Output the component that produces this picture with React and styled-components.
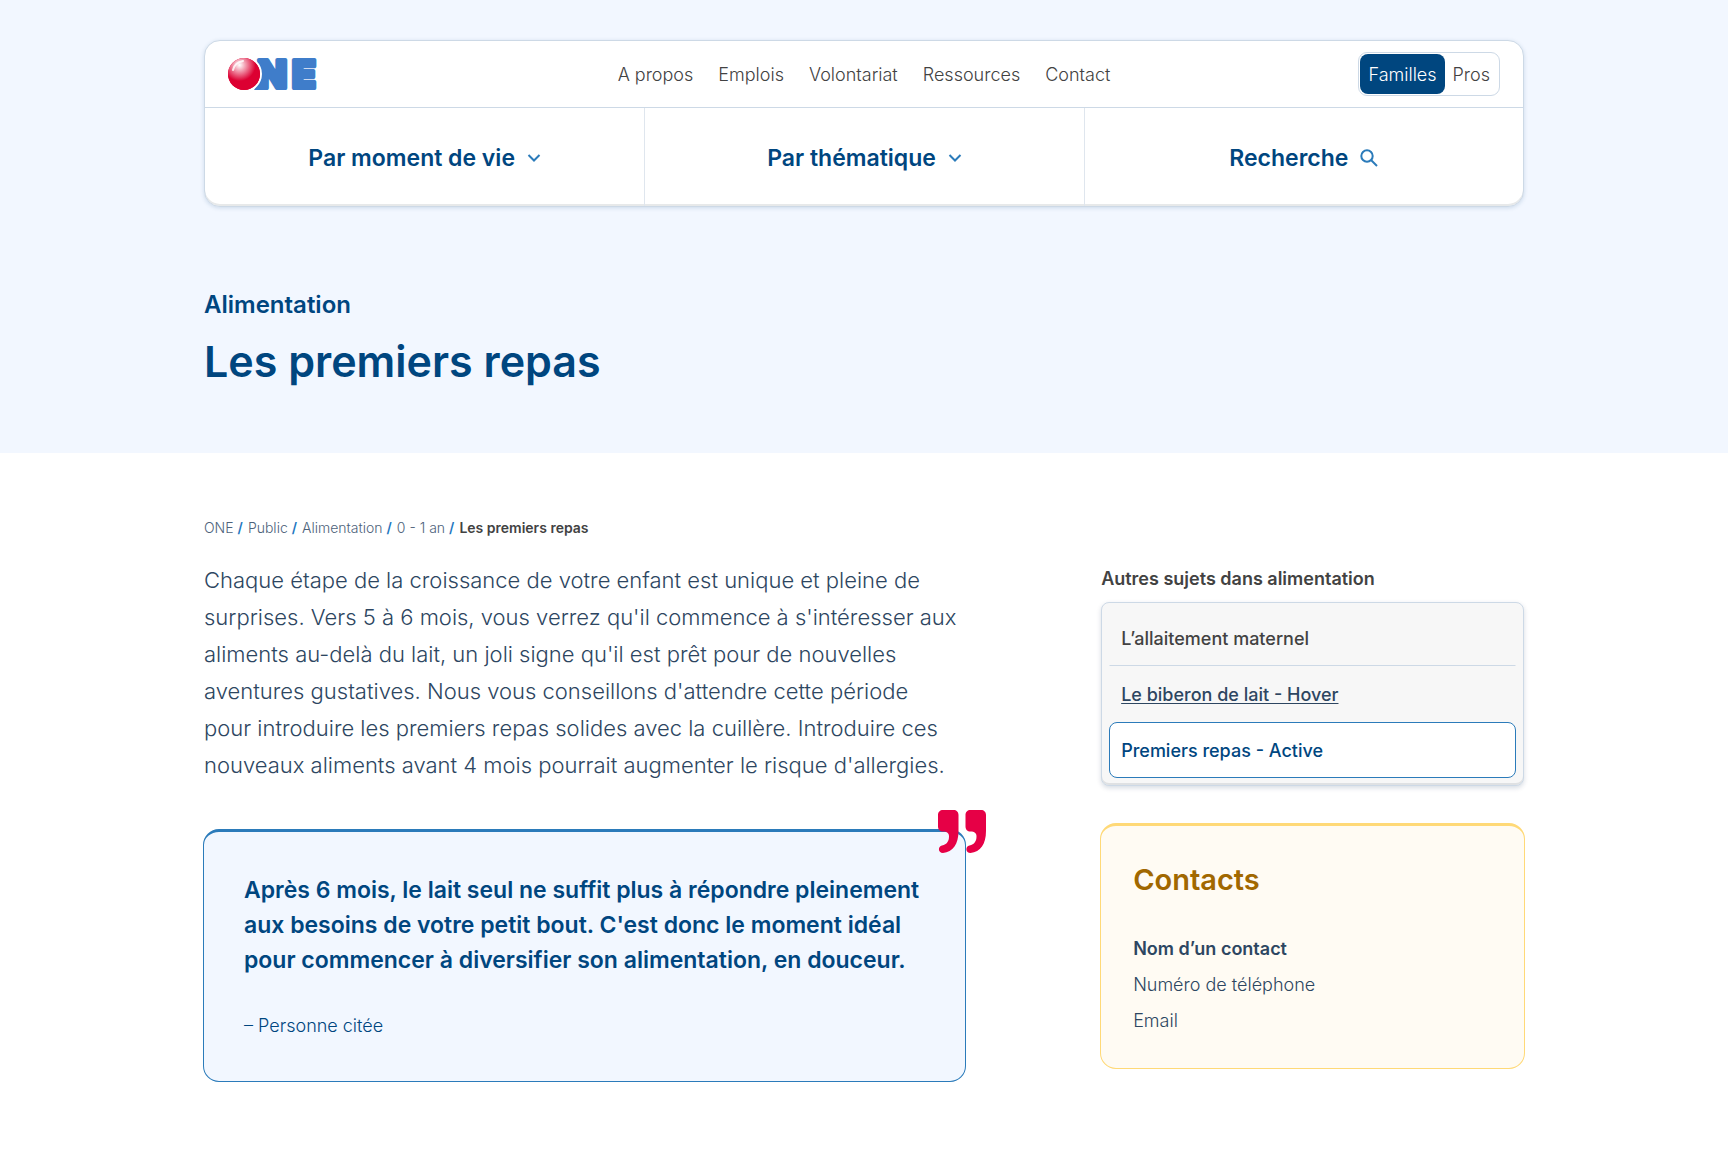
import {useState} from 'react'
import styled,{createGlobalStyle} from 'styled-components'

const GlobalStyle = createGlobalStyle`
	*{
		box-sizing:border-box;
	}
	body{
		margin:0;
		background:#fff;
		color:#2d4661;
		font-family:Inter, "Liberation Sans", sans-serif;
		font-weight:300;
	}
	a{
		color:inherit;
		text-decoration:none;
	}
	button{
		font:inherit;
		color:inherit;
		border:0;
		background:none;
		padding:0;
		cursor:pointer;
	}
	h1,h2,p,ul,ol,blockquote{
		margin:0;
		padding:0;
	}
	ul,ol{
		list-style:none;
	}
`

const Wrapper = styled.div`
	max-width:1368px;
	margin:0 auto;
	padding:0 24px;
`

const Hero = styled.div`
	background:#f2f7ff;
	padding:40px 0 64px;
`

const Header = styled.header`
	background:#fff;
	border:1px solid #cdd9e6;
	border-radius:16px;
	box-shadow:inset 0 -2px 0 #e7e9ea, 0 1px 4px rgba(0,70,127,0.16);
`

const TopBar = styled.div`
	display:grid;
	grid-template-columns:1fr auto 1fr;
	align-items:center;
	height:67px;
	padding:0 23px;
	border-bottom:1px solid #cdd9e6;
`

const LogoLink = styled.a`
	display:flex;
	justify-self:start;
`

const Nav = styled.nav`
	display:flex;
	gap:25px;
	padding-top:2px;
	font-size:18px;
	line-height:26px;
	color:#424242;
`

const Toggle = styled.div`
	display:flex;
	justify-self:end;
	padding:1px;
	border:1px solid #cdd9e6;
	border-radius:9px;
`

const ToggleButton = styled.button`
	height:40px;
	padding:0 8px;
	border-radius:8px;
	font-size:18px;
	background:${({$active}) => $active ? '#00467f' : 'transparent'};
	color:${({$active}) => $active ? '#fff' : '#424242'};
`

const MainMenu = styled.div`
	display:grid;
	grid-template-columns:repeat(3, 1fr);
`

const MenuButton = styled.button`
	display:flex;
	align-items:center;
	justify-content:center;
	gap:12px;
	height:98px;
	padding-top:2px;
	font-size:23px;
	font-weight:600;
	color:#00467f;
	& + &{
		border-left:1px solid #dfe6ee;
	}
`

const Category = styled.p`
	margin-top:80px;
	font-size:24px;
	line-height:36px;
	font-weight:600;
	color:#00467f;
`

const Title = styled.h1`
	margin-top:10px;
	font-size:43px;
	line-height:56px;
	font-weight:600;
	color:#00467f;
`

const Breadcrumb = styled.ol`
	display:flex;
	flex-wrap:wrap;
	margin-top:65px;
	font-size:14px;
	line-height:20px;
	color:#4d627a;
	li + li::before{
		content:"/";
		margin:0 5px 0 4px;
		font-weight:600;
		color:#1f78c1;
	}
	[aria-current]{
		font-weight:600;
		color:#424242;
	}
`

const Columns = styled.div`
	display:grid;
	grid-template-columns:9fr 5fr;
	align-items:start;
	gap:136px;
	margin-top:24px;
	padding-bottom:80px;
`

const Intro = styled.p`
	max-width:755px;
	font-size:22px;
	line-height:37px;
`

const Card = styled.section`
	margin:0 -1px;
	border:1px solid ${({$line}) => $line};
	border-top-width:3px;
	border-radius:16px;
	background:${({$fill}) => $fill};
	padding:${({$pad}) => $pad};
`

const QuoteCard = styled(Card)`
	position:relative;
	margin-top:45px;
	color:#00467f;
	blockquote{
		font-size:23px;
		line-height:35px;
		font-weight:600;
	}
	p{
		margin-top:34px;
		font-size:18px;
		line-height:28px;
	}
`

const QuoteMark = styled.svg`
	position:absolute;
	top:-22px;
	right:-21px;
`

const Aside = styled.aside`
	padding-top:5px;
`

const AsideTitle = styled.h2`
	font-size:18px;
	line-height:24px;
	font-weight:600;
	color:#424242;
`

const TopicList = styled.ul`
	margin:11px 0 37px;
	padding:7px;
	border:1px solid #cdd9e6;
	border-radius:8px;
	background:#f7f7f7;
	box-shadow:inset 0 -2px 0 #dfe1e3, 0 2px 5px rgba(0,40,80,0.16);
`

const Topic = styled.a`
	display:flex;
	align-items:center;
	height:56px;
	padding:0 11px;
	border:1px solid transparent;
	font-size:18px;
	font-weight:500;
	color:#424242;
	${({$state}) => $state === 'divided' && `
		border-bottom-color:#cdd9e6;
	`}
	${({$state}) => $state === 'hover' && `
		color:#2d4661;
		text-decoration:underline;
		text-decoration-thickness:1px;
		text-underline-offset:2px;
	`}
	${({$state}) => $state === 'active' && `
		color:#00467f;
		background:#fff;
		border-color:#2b7bba;
		border-radius:8px;
	`}
`

const ContactTitle = styled.h2`
	margin-bottom:29px;
	font-size:29px;
	line-height:44px;
	font-weight:600;
	color:#a16800;
`

const ContactLine = styled.p`
	font-size:18px;
	line-height:36px;
	font-weight:${({$strong}) => $strong ? 600 : 300};
`

const links = ['A propos','Emplois','Volontariat','Ressources','Contact']
const crumbs = ['ONE','Public','Alimentation','0 - 1 an']
const topics = [
	{label:'L’allaitement maternel',state:'divided'},
	{label:'Le biberon de lait - Hover',state:'hover'},
	{label:'Premiers repas - Active',state:'active'},
]

function Logo() {
	return(
	<svg width="96" height="54" viewBox="0 -10 96 54" role="img" aria-label="ONE">
		<defs>
			<radialGradient id="ball" cx="0.36" cy="0.22" r="0.5">
				<stop offset="0" stopColor="#fff"/>
				<stop offset="0.35" stopColor="#f3a3b5"/>
				<stop offset="1" stopColor="#dc0032"/>
			</radialGradient>
		</defs>
		<g fill="#3f7dca" stroke="#3f7dca" strokeWidth="4" strokeLinejoin="round" fontFamily="Inter, sans-serif" fontWeight="900" fontSize="39">
			<text x="29" y="31">N</text>
			<text x="64" y="31">E</text>
		</g>
		<path d="M26 33L34 20H36V33Z" fill="#3f7dca"/>
		<circle cx="16" cy="17" r="18" fill="#fff"/>
		<circle cx="16" cy="17" r="16" fill="#dc0032"/>
		<circle cx="16" cy="17" r="16" fill="url(#ball)"/>
		<path d="M5 13C6 8 9 5 15 4" fill="none" stroke="#fff" strokeWidth="2" strokeLinecap="round" opacity="0.8"/>
	</svg>
	)
}

function Chevron() {
	return(
	<svg width="14" height="14" viewBox="0 0 14 14" fill="none" stroke="#2b7bba" strokeWidth="2" aria-hidden="true">
		<path d="M1.500 4L7 9.500L12.500 4"/>
	</svg>
	)
}

function SearchIcon() {
	return(
	<svg width="18" height="18" viewBox="0 0 18 18" fill="none" stroke="#2b7bba" strokeWidth="2" aria-hidden="true">
		<circle cx="7" cy="7" r="5.700"/>
		<path d="M11 11L17 17"/>
	</svg>
	)
}

export default function App() {
	const[audience,setAudience] = useState('Familles');

	return(
	<>
		<GlobalStyle/>
		<Hero>
			<Wrapper>
				<Header>
					<TopBar>
						<LogoLink href="#"><Logo/></LogoLink>
						<Nav>
							{links.map((link)=>(
								<a key={link} href="#">{link}</a>
							))}
						</Nav>
						<Toggle>
							{['Familles','Pros'].map((name)=>(
								<ToggleButton
								key={name}
								type="button"
								aria-pressed={audience === name}
								$active={audience === name}
								onClick={()=>setAudience(name)}>{name}</ToggleButton>
							))}
						</Toggle>
					</TopBar>
					<MainMenu>
						<MenuButton type="button">Par moment de vie <Chevron/></MenuButton>
						<MenuButton type="button">Par thématique <Chevron/></MenuButton>
						<MenuButton type="button">Recherche <SearchIcon/></MenuButton>
					</MainMenu>
				</Header>
				<Category>Alimentation</Category>
				<Title>Les premiers repas</Title>
			</Wrapper>
		</Hero>
		<Wrapper as="main">
			<Breadcrumb>
				{crumbs.map((crumb)=>(
					<li key={crumb}><a href="#">{crumb}</a></li>
				))}
				<li><span aria-current="page">Les premiers repas</span></li>
			</Breadcrumb>
			<Columns>
				<div>
					<Intro>
						Chaque étape de la croissance de votre enfant est unique et pleine de surprises. Vers 5 à 6 mois, vous verrez qu'il commence à s'intéresser aux aliments au-delà du lait, un joli signe qu'il est prêt pour de nouvelles aventures gustatives. Nous vous conseillons d'attendre cette période pour introduire les premiers repas solides avec la cuillère. Introduire ces nouveaux aliments avant 4 mois pourrait augmenter le risque d'allergies.
					</Intro>
					<QuoteCard $line="#2b7bba" $fill="#f2f7ff" $pad="41px 40px">
						<QuoteMark width="48" height="43" viewBox="0 0 48 43" fill="#e60046" aria-hidden="true">
							<path d="M5 0H15.500C18.500 0 20.500 2 20.500 5V21C20.500 34 15 42 5 43C0 43 -0.500 36.500 4 35.500C9 34.500 11 31 11 26.500C11 23 9 21.500 5 21.500C2 21.500 0 19.500 0 16.500V5C0 2 2 0 5 0Z"/>
							<path transform="translate(27.500 0)" d="M5 0H15.500C18.500 0 20.500 2 20.500 5V21C20.500 34 15 42 5 43C0 43 -0.500 36.500 4 35.500C9 34.500 11 31 11 26.500C11 23 9 21.500 5 21.500C2 21.500 0 19.500 0 16.500V5C0 2 2 0 5 0Z"/>
						</QuoteMark>
						<blockquote>
							Après 6 mois, le lait seul ne suffit plus à répondre pleinement aux besoins de votre petit bout. C'est donc le moment idéal pour commencer à diversifier son alimentation, en douceur.
						</blockquote>
						<p>– Personne citée</p>
					</QuoteCard>
				</div>
				<Aside>
					<AsideTitle>Autres sujets dans alimentation</AsideTitle>
					<TopicList>
						{topics.map((topic)=>(
							<li key={topic.label}><Topic href="#" $state={topic.state}>{topic.label}</Topic></li>
						))}
					</TopicList>
					<Card $line="#ffd977" $fill="#fffbf3" $pad="32px 32px 29px">
						<ContactTitle>Contacts</ContactTitle>
						<ContactLine $strong>Nom d’un contact</ContactLine>
						<ContactLine>Numéro de téléphone</ContactLine>
						<ContactLine>Email</ContactLine>
					</Card>
				</Aside>
			</Columns>
		</Wrapper>
	</>
	)
}
